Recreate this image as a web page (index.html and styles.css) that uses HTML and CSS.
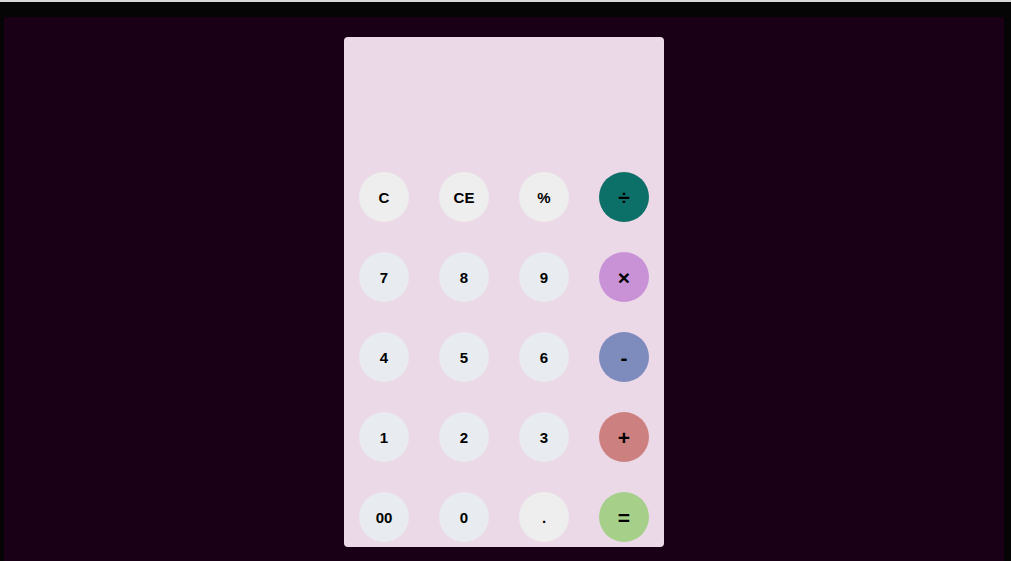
FILE: index.html
```html
<!DOCTYPE html>
<html lang="en">
<head>
<meta charset="utf-8">
<title>Calculator</title>
<link rel="stylesheet" href="styles.css">
</head>
<body>
<div class="topline"></div>
<main class="stage">
  <section class="calc">
    <div class="display"></div>
    <div class="keys">
      <button class="key fn">C</button>
      <button class="key fn">CE</button>
      <button class="key fn">%</button>
      <button class="key op div">÷</button>
      <button class="key num">7</button>
      <button class="key num">8</button>
      <button class="key num">9</button>
      <button class="key op mul">×</button>
      <button class="key num">4</button>
      <button class="key num">5</button>
      <button class="key num">6</button>
      <button class="key op sub">-</button>
      <button class="key num">1</button>
      <button class="key num">2</button>
      <button class="key num">3</button>
      <button class="key op add">+</button>
      <button class="key num">00</button>
      <button class="key num">0</button>
      <button class="key fn">.</button>
      <button class="key op eq">=</button>
    </div>
  </section>
</main>
</body>
</html>
```

FILE: styles.css
```css
html, body {
  margin: 0;
  padding: 0;
  height: 100%;
  overflow: hidden;
}
body {
  background: #050505;
  font-family: "Liberation Sans", Arial, sans-serif;
}
.topline {
  height: 2px;
  background: #d8d8d8;
}
.stage {
  margin: 15px 7px 0 4px;
  height: 560px;
  background: #1a0017;
  display: flex;
  justify-content: center;
  padding-top: 20px;
  box-sizing: border-box;
}
.calc {
  width: 320px;
  height: 510px;
  background: #ecd9e8;
  border-radius: 4px;
  display: flex;
  flex-direction: column;
}
.display {
  height: 135px;
}
.keys {
  display: grid;
  grid-template-columns: repeat(4, 50px);
  grid-auto-rows: 50px;
  gap: 30px;
  padding: 0 15px;
}
.key {
  width: 50px;
  height: 50px;
  border: none;
  border-radius: 50%;
  padding: 0;
  font-family: "Liberation Sans", Arial, sans-serif;
  font-weight: bold;
  font-size: 15px;
  line-height: 1;
  color: #000;
  display: flex;
  align-items: center;
  justify-content: center;
}
.fn { background: #eeeeee; }
.num { background: #e8ebef; }
.op { font-size: 21px; }
.div { background: #0d7068; }
.mul { background: #c991d6; }
.sub { background: #7d8bbd; }
.add { background: #cd8080; }
.eq { background: #a6cf8a; }
```
